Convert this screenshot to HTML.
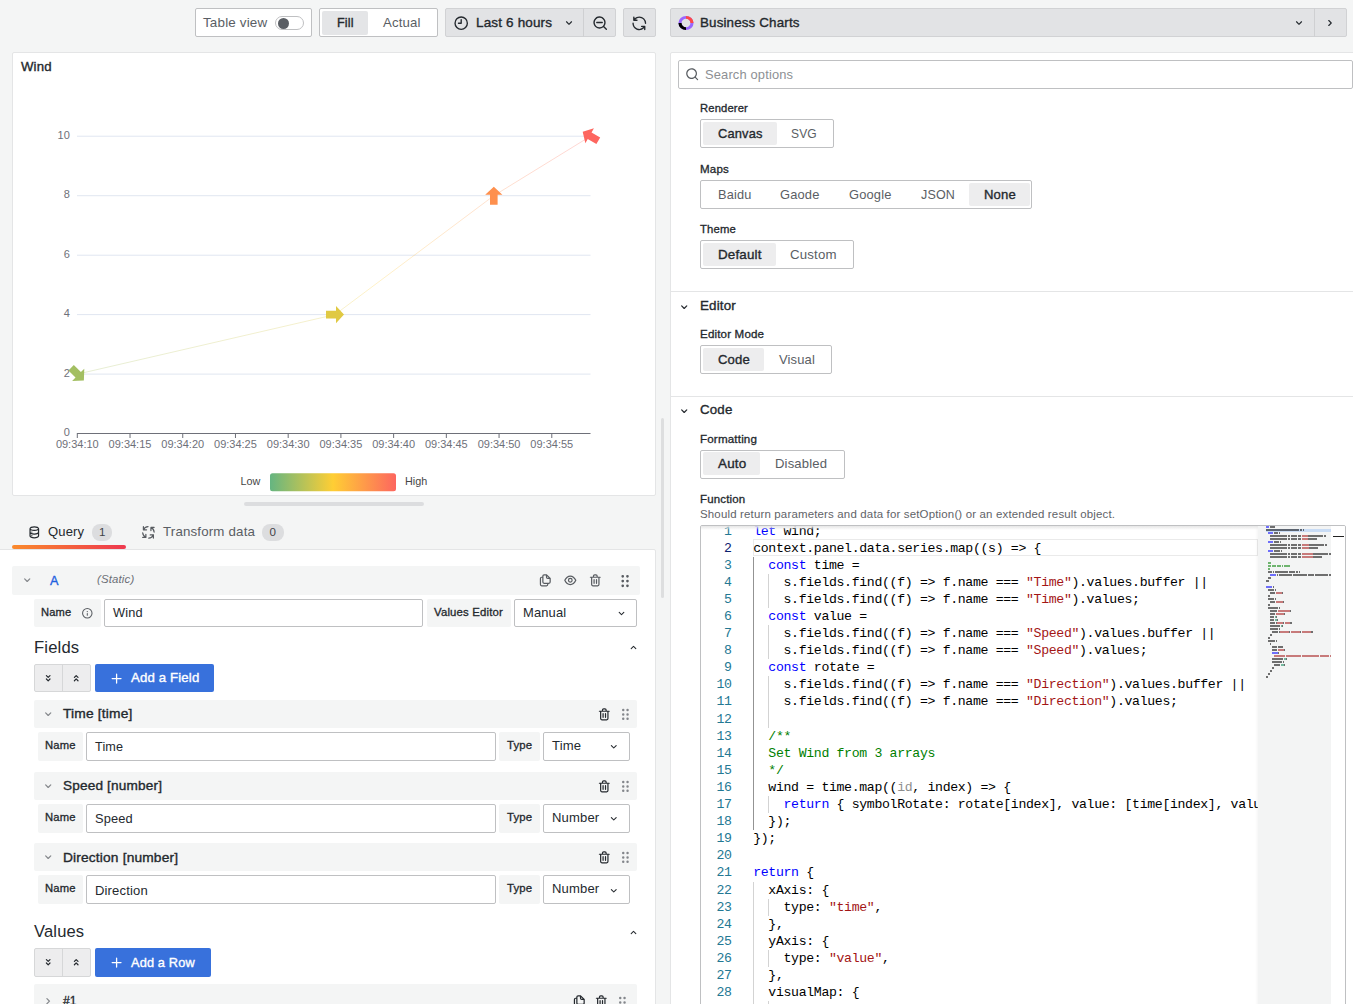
<!DOCTYPE html>
<html><head><meta charset="utf-8"><title>Edit panel - Wind</title>
<style>
html,body{margin:0;padding:0}
html{overflow:hidden;width:1353px;height:1004px}
.root{left:0;top:0;width:1353px;height:1004px;overflow:hidden}
body{width:1353px;height:1004px;overflow:hidden;background:#f4f5f5;position:relative;font-family:"Liberation Sans",sans-serif;font-size:12.600px;color:#24292e}
div,span,svg{position:absolute;box-sizing:border-box}
.ic{overflow:visible}
.abs{position:absolute}
.t{white-space:nowrap;transform:translateY(-50%);transform-origin:0 50%;line-height:1;color:#24292e}
.b{-webkit-text-stroke:.35px currentColor}
.sec{color:#5a5e64}
.lb{-webkit-text-stroke:.3px currentColor}
.inp{background:#fff;border:1px solid #bfc0c2;border-radius:2px}
.btn{background:#e2e3e5;border:1px solid #d1d2d4;border-radius:2px}
.sel{background:#ededee;border-radius:2px}
.pri{background:#3871dc;border-radius:2px}
.lbl{background:#f4f5f5;border-radius:2px}
.hdr{background:#f4f5f5;border-radius:2px}
.pill{background:#dcdddf;border-radius:8px}
.panel{background:#fff;border:1px solid #e4e5e6;border-radius:2px}
.sw{width:29px;height:13.800px;border-radius:8px;background:#fff;border:1px solid #bfc0c2}
.swk{width:11px;height:11px;border-radius:50%;background:#5a5e64}
.ax{font-family:"Liberation Sans",sans-serif;font-size:11px;fill:#6E7079}
.vm{font-family:"Liberation Sans",sans-serif;font-size:10.800px;fill:#464646}
.editor{background:#fff;border:1px solid #bfc0c2;border-radius:2px;overflow:hidden;font-family:"Liberation Mono",monospace;font-size:13.200px;letter-spacing:-.336px}
.ln{left:0;width:30.600px;text-align:right;height:17.100px;line-height:17.100px;color:#237893;white-space:pre}
.ln.act{color:#0b216f}
.cl{left:52.200px;height:17.100px;line-height:17.100px;white-space:pre;color:#000}
.cl span{position:static}
.k{color:#0000ff}.s{color:#a31515}.c{color:#008000}.n{color:#098658}.f{color:#8e8e8e}
</style></head>
<body>
<div class="root">
<div class="inp" style="left:195px;top:8px;width:117px;height:29px;"></div>
<span class="t sec" style="left:202.9px;top:23.20px;font-size:12.7px;letter-spacing:0.15px;transform:translateY(-50%) scaleX(1.0584);">Table view</span>
<div class="sw" style="left:275px;top:16px"></div><div class="swk" style="left:278.200px;top:17.700px"></div>
<div class="inp" style="left:319px;top:8px;width:119px;height:29px;"></div>
<div class="sel" style="left:322px;top:11px;width:46px;height:24px;background:#e4e5e7"></div>
<span class="t b" style="left:336.8px;top:23.20px;font-size:12.7px;letter-spacing:0.15px;transform:translateY(-50%) scaleX(0.9910);">Fill</span>
<span class="t sec" style="left:382.7px;top:23.20px;font-size:12.7px;letter-spacing:0.15px;transform:translateY(-50%) scaleX(1.0402);">Actual</span>
<div class="btn" style="left:445px;top:8px;width:171px;height:29px;"></div>
<div class="abs" style="left:583px;top:8px;width:1px;height:29px;background:#cfd0d2"></div>
<svg class="ic" style="left:452.9px;top:14.7px;width:16.4px;height:16.4px;color:#24292e;" viewBox="0 0 24 24"><path fill="currentColor" d="M12,2A10,10,0,1,0,22,12,10.010,10.010,0,0,0,12,2Zm0,18a8,8,0,1,1,8-8A8.010,8.010,0,0,1,12,20ZM12,6a1,1,0,0,0-1,1v4H8a1,1,0,0,0,0,2h4a1,1,0,0,0,1-1V7A1,1,0,0,0,12,6Z"/></svg>
<span class="t b" style="left:476.4px;top:23.20px;font-size:12.7px;letter-spacing:0.15px;transform:translateY(-50%) scaleX(1.0636);">Last 6 hours</span>
<svg class="ic" style="left:562.0px;top:15.5px;width:14px;height:14px;color:#24292e;" viewBox="0 0 24 24"><path fill="currentColor" d="M17,9.170a1,1,0,0,0-1.410,0L12,12.710,8.460,9.170a1,1,0,0,0-1.410,0,1,1,0,0,0,0,1.420l4.240,4.240a1,1,0,0,0,1.420,0L17,10.590A1,1,0,0,0,17,9.170Z"/></svg>
<svg class="ic" style="left:592.0px;top:14.7px;width:16.4px;height:16.4px;color:#24292e;" viewBox="0 0 24 24"><path fill="currentColor" d="M21.710,20.290,18,16.610A9,9,0,1,0,16.610,18l3.680,3.680a1,1,0,0,0,1.420,0A1,1,0,0,0,21.710,20.290ZM11,18a7,7,0,1,1,7-7A7,7,0,0,1,11,18Zm4-8H7a1,1,0,0,0,0,2h8a1,1,0,0,0,0-2Z"/></svg>
<div class="btn" style="left:623px;top:8px;width:33px;height:29px;"></div>
<svg class="ic" style="left:630.9px;top:14.5px;width:16.6px;height:16.6px;color:#24292e;" viewBox="0 0 24 24"><path fill="currentColor" d="M19.910,15.510H15.380a1,1,0,0,0,0,2h2.400A8,8,0,0,1,4,12a1,1,0,0,0-2,0,10,10,0,0,0,16.880,7.230V21a1,1,0,0,0,2,0V16.500A1,1,0,0,0,19.910,15.510ZM12,2A10,10,0,0,0,5.120,4.770V3a1,1,0,0,0-2,0V7.500a1,1,0,0,0,1,1h4.500a1,1,0,0,0,0-2H6.220A8,8,0,0,1,20,12a1,1,0,0,0,2,0A10,10,0,0,0,12,2Z"/></svg>
<div class="panel" style="left:12px;top:52px;width:644px;height:444px;"></div>
<span class="t b" style="left:20.9px;top:67.20px;font-size:12.7px;letter-spacing:0.15px;transform:translateY(-50%) scaleX(1.0408);">Wind</span>
<svg class="abs" style="left:0;top:0" width="1353" height="520" viewBox="0 0 1353 520"><defs><linearGradient id="lg" gradientUnits="userSpaceOnUse" x1="0" y1="433.500" x2="0" y2="136.200"><stop offset="0" stop-color="#65B581"/><stop offset=".5" stop-color="#FFCE34"/><stop offset="1" stop-color="#FD665F"/></linearGradient><linearGradient id="vm" x1="0" x2="1" y1="0" y2="0"><stop offset="0" stop-color="#65B581"/><stop offset=".5" stop-color="#FFCE34"/><stop offset="1" stop-color="#FD665F"/></linearGradient></defs><rect x="77" y="135.7" width="513.5" height="1" fill="#E0E6F1"/><text x="69.800" y="138.79999999999998" text-anchor="end" class="ax">10</text><rect x="77" y="195.2" width="513.5" height="1" fill="#E0E6F1"/><text x="69.800" y="198.29999999999998" text-anchor="end" class="ax">8</text><rect x="77" y="254.7" width="513.5" height="1" fill="#E0E6F1"/><text x="69.800" y="257.8" text-anchor="end" class="ax">6</text><rect x="77" y="314.1" width="513.5" height="1" fill="#E0E6F1"/><text x="69.800" y="317.20000000000005" text-anchor="end" class="ax">4</text><rect x="77" y="373.6" width="513.5" height="1" fill="#E0E6F1"/><text x="69.800" y="376.70000000000005" text-anchor="end" class="ax">2</text><text x="69.800" y="436.1" text-anchor="end" class="ax">0</text><rect x="77" y="433" width="513.5" height="1" fill="#6E7079"/><rect x="76.80" y="433" width="1" height="5" fill="#6E7079"/><text x="77.30" y="447.800" text-anchor="middle" class="ax">09:34:10</text><rect x="129.52" y="433" width="1" height="5" fill="#6E7079"/><text x="130.02" y="447.800" text-anchor="middle" class="ax">09:34:15</text><rect x="182.24" y="433" width="1" height="5" fill="#6E7079"/><text x="182.74" y="447.800" text-anchor="middle" class="ax">09:34:20</text><rect x="234.96" y="433" width="1" height="5" fill="#6E7079"/><text x="235.46" y="447.800" text-anchor="middle" class="ax">09:34:25</text><rect x="287.68" y="433" width="1" height="5" fill="#6E7079"/><text x="288.18" y="447.800" text-anchor="middle" class="ax">09:34:30</text><rect x="340.40" y="433" width="1" height="5" fill="#6E7079"/><text x="340.90" y="447.800" text-anchor="middle" class="ax">09:34:35</text><rect x="393.12" y="433" width="1" height="5" fill="#6E7079"/><text x="393.62" y="447.800" text-anchor="middle" class="ax">09:34:40</text><rect x="445.84" y="433" width="1" height="5" fill="#6E7079"/><text x="446.34" y="447.800" text-anchor="middle" class="ax">09:34:45</text><rect x="498.56" y="433" width="1" height="5" fill="#6E7079"/><text x="499.06" y="447.800" text-anchor="middle" class="ax">09:34:50</text><rect x="551.28" y="433" width="1" height="5" fill="#6E7079"/><text x="551.78" y="447.800" text-anchor="middle" class="ax">09:34:55</text><polyline fill="none" stroke="url(#lg)" stroke-width="1" stroke-opacity=".27" points="77.5,374.1 335,314.6 493.8,195.7 590.5,136.2"/><path transform="translate(77.5,374.1) rotate(135)" fill="#A3BF62" d="M0-9L8.600-1H3.800V9H-3.800V-1H-8.600Z"/><path transform="translate(335,314.6) rotate(90)" fill="#E0C943" d="M0-9L8.600-1H3.800V9H-3.800V-1H-8.600Z"/><path transform="translate(493.8,195.7) rotate(0)" fill="#FE904E" d="M0-9L8.600-1H3.800V9H-3.800V-1H-8.600Z"/><path transform="translate(590.5,136.2) rotate(-60)" fill="#FD665F" d="M0-9L8.600-1H3.800V9H-3.800V-1H-8.600Z"/><rect x="270" y="473.300" width="126" height="18" rx="2.500" fill="url(#vm)"/><text x="240.600" y="484.800" class="vm">Low</text><text x="405" y="484.800" class="vm">High</text></svg>
<div class="abs" style="left:244px;top:502px;width:180px;height:3.6px;background:#dcdddf;border-radius:2px"></div>
<div class="abs" style="left:661.2px;top:418px;width:3.2px;height:180px;background:#dddedf;border-radius:2px"></div>
<svg class="ic" style="left:26.8px;top:524.7px;width:14.6px;height:14.6px;color:#24292e;" viewBox="0 0 24 24"><path fill="currentColor" d="M8,16.500a1,1,0,1,0,1,1A1,1,0,0,0,8,16.500ZM12,2C8,2,4,3.370,4,6V18c0,2.630,4,4,8,4s8-1.370,8-4V6C20,3.370,16,2,12,2Zm6,16c0,.71-2.280,2-6,2s-6-1.290-6-2V14.730A13.160,13.160,0,0,0,12,16a13.160,13.160,0,0,0,6-1.270Zm0-6c0,.71-2.280,2-6,2s-6-1.290-6-2V8.730A13.160,13.160,0,0,0,12,10a13.160,13.160,0,0,0,6-1.270ZM12,8C8.280,8,6,6.710,6,6s2.280-2,6-2,6,1.290,6,2S15.720,8,12,8ZM8,10.500a1,1,0,1,0,1,1A1,1,0,0,0,8,10.500Z"/></svg>
<span class="t" style="left:48.2px;top:532.20px;font-size:12.7px;letter-spacing:0.15px;transform:translateY(-50%) scaleX(1.0284);">Query</span>
<div class="pill" style="left:92px;top:524px;width:20px;height:16.8px;"></div>
<span class="t" style="left:98.9px;top:532.00px;font-size:12.7px;color:#3f4348;font-size:11.600px">1</span>
<div class="abs" style="left:12px;top:545px;width:114px;height:3.6px;background:linear-gradient(90deg,#fa8a2c,#ee384f);border-radius:2px"></div>
<svg class="ic" style="left:140.8px;top:524.6px;width:14.8px;height:14.8px;color:#585c61;" viewBox="0 0 24 24"><path fill="none" stroke="currentColor" stroke-width="2" stroke-linecap="round" stroke-linejoin="round" stroke-width="1.900" transform="rotate(0 12 12)" d="M3.900 2.800V7.900H9M3.900 7.900A9.300 9.300 0 0 1 11.400 2.720"/><path fill="none" stroke="currentColor" stroke-width="2" stroke-linecap="round" stroke-linejoin="round" stroke-width="1.900" transform="rotate(-90 12 12)" d="M3.900 2.800V7.900H9M3.900 7.900A9.300 9.300 0 0 1 11.400 2.720"/><path fill="none" stroke="currentColor" stroke-width="2" stroke-linecap="round" stroke-linejoin="round" stroke-width="1.900" transform="rotate(-180 12 12)" d="M3.900 2.800V7.900H9M3.900 7.900A9.300 9.300 0 0 1 11.400 2.720"/><path fill="none" stroke="currentColor" stroke-width="2" stroke-linecap="round" stroke-linejoin="round" stroke-width="1.900" transform="rotate(-270 12 12)" d="M3.900 2.800V7.900H9M3.900 7.900A9.300 9.300 0 0 1 11.400 2.720"/></svg>
<span class="t sec" style="left:162.8px;top:532.20px;font-size:12.7px;letter-spacing:0.15px;transform:translateY(-50%) scaleX(1.0502);">Transform data</span>
<div class="pill" style="left:262.3px;top:524px;width:21.7px;height:16.8px;"></div>
<span class="t" style="left:269.6px;top:532.00px;font-size:12.7px;color:#3f4348;font-size:11.600px">0</span>
<div class="panel" style="left:-2px;top:549px;width:658px;height:470px;border-radius:0 2px 0 0"></div>
<div class="hdr" style="left:12px;top:566px;width:628px;height:28.7px;"></div>
<svg class="ic" style="left:20.0px;top:572.9px;width:14.4px;height:14.4px;color:#85888c;" viewBox="0 0 24 24"><path fill="currentColor" d="M17,9.170a1,1,0,0,0-1.410,0L12,12.710,8.460,9.170a1,1,0,0,0-1.410,0,1,1,0,0,0,0,1.420l4.240,4.240a1,1,0,0,0,1.420,0L17,10.590A1,1,0,0,0,17,9.170Z"/></svg>
<span class="t b" style="left:50px;top:581.20px;font-size:12.7px;color:#1f62e0">A</span>
<span class="t sm" style="left:96.5px;top:578.80px;font-size:10.9px;letter-spacing:0.15px;transform:translateY(-50%) scaleX(1.0464);color:#6b6f75;font-style:italic">(Static)</span>
<svg class="ic" style="left:538.1px;top:572.7px;width:14.6px;height:14.6px;color:#585c61;" viewBox="0 0 24 24"><path fill="currentColor" d="M21,8.940a1.310,1.310,0,0,0-.06-.27l0-.09a1.070,1.070,0,0,0-.19-.28h0l-6-6h0a1.070,1.070,0,0,0-.28-.19.320.320,0,0,0-.09,0A.880.880,0,0,0,14.050,2H10A3,3,0,0,0,7,5V6H6A3,3,0,0,0,3,9V19a3,3,0,0,0,3,3h8a3,3,0,0,0,3-3V18h1a3,3,0,0,0,3-3V9S21,9,21,8.940ZM15,5.410,17.590,8H16a1,1,0,0,1-1-1ZM15,19a1,1,0,0,1-1,1H6a1,1,0,0,1-1-1V9A1,1,0,0,1,6,8H7v7a3,3,0,0,0,3,3h5Zm4-4a1,1,0,0,1-1,1H10a1,1,0,0,1-1-1V5a1,1,0,0,1,1-1h3V7a3,3,0,0,0,3,3h3Z"/></svg>
<svg class="ic" style="left:562.9px;top:572.7px;width:14.6px;height:14.6px;color:#585c61;" viewBox="0 0 24 24"><path fill="currentColor" d="M21.920,11.600C19.900,6.910,16.100,4,12,4S4.100,6.910,2.080,11.600a1,1,0,0,0,0,.8C4.100,17.090,7.900,20,12,20s7.900-2.910,9.920-7.600A1,1,0,0,0,21.920,11.600ZM12,18c-3.170,0-6.170-2.290-7.900-6C5.830,8.290,8.830,6,12,6s6.170,2.290,7.900,6C18.170,15.710,15.170,18,12,18ZM12,8a4,4,0,1,0,4,4A4,4,0,0,0,12,8Zm0,6a2,2,0,1,1,2-2A2,2,0,0,1,12,14Z"/></svg>
<svg class="ic" style="left:587.9px;top:572.7px;width:14.6px;height:14.6px;color:#585c61;" viewBox="0 0 24 24"><path fill="currentColor" d="M10,18a1,1,0,0,0,1-1V11a1,1,0,0,0-2,0v6A1,1,0,0,0,10,18ZM20,6H16V5a3,3,0,0,0-3-3H11A3,3,0,0,0,8,5V6H4A1,1,0,0,0,4,8H5V19a3,3,0,0,0,3,3h8a3,3,0,0,0,3-3V8h1a1,1,0,0,0,0-2ZM10,5a1,1,0,0,1,1-1h2a1,1,0,0,1,1,1V6H10Zm7,14a1,1,0,0,1-1,1H8a1,1,0,0,1-1-1V8H17Zm-3-1a1,1,0,0,0,1-1V11a1,1,0,0,0-2,0v6A1,1,0,0,0,14,18Z"/></svg>
<svg class="ic" style="left:617.0px;top:572.8px;width:16.2px;height:16.2px;color:#585c61;" viewBox="0 0 24 24"><path fill="currentColor" d="M8.500,10a2,2,0,1,0,2,2A2,2,0,0,0,8.500,10Zm0,7a2,2,0,1,0,2,2A2,2,0,0,0,8.500,17Zm7-10a2,2,0,1,0-2-2A2,2,0,0,0,15.500,7Zm-7-4a2,2,0,1,0,2,2A2,2,0,0,0,8.500,3Zm7,14a2,2,0,1,0,2,2A2,2,0,0,0,15.500,17Zm0-7a2,2,0,1,0,2,2A2,2,0,0,0,15.500,10Z"/></svg>
<div class="lbl" style="left:34.2px;top:599.2px;width:66.6px;height:27.6px;"></div>
<span class="t lb" style="left:41.2px;top:611.80px;font-size:10.9px;letter-spacing:0.15px;transform:translateY(-50%) scaleX(1.0220);">Name</span>
<svg class="ic" style="left:80.7px;top:606.7px;width:12.6px;height:12.6px;color:#585c61;" viewBox="0 0 24 24"><path fill="currentColor" d="M12,2A10,10,0,1,0,22,12,10.010,10.010,0,0,0,12,2Zm0,18a8,8,0,1,1,8-8A8,8,0,0,1,12,20Zm0-8.500a1,1,0,0,0-1,1v3a1,1,0,0,0,2,0v-3A1,1,0,0,0,12,11.500Zm0-4a1.250,1.250,0,1,0,1.250,1.250A1.250,1.250,0,0,0,12,7.500Z"/></svg>
<div class="inp" style="left:104px;top:599.2px;width:318.6px;height:27.6px;"></div>
<span class="t" style="left:112.6px;top:613.00px;font-size:12.7px;letter-spacing:0.15px;transform:translateY(-50%) scaleX(1.0068);">Wind</span>
<div class="lbl" style="left:427px;top:599.2px;width:84px;height:27.6px;"></div>
<span class="t lb" style="left:434.2px;top:611.80px;font-size:10.9px;letter-spacing:0.15px;transform:translateY(-50%) scaleX(1.0456);">Values Editor</span>
<div class="inp" style="left:514px;top:599.2px;width:122.7px;height:27.6px;"></div>
<span class="t" style="left:523.1px;top:613.00px;font-size:12.7px;letter-spacing:0.15px;transform:translateY(-50%) scaleX(1.0189);">Manual</span>
<svg class="ic" style="left:614.5px;top:607.0px;width:13px;height:13px;color:#24292e;" viewBox="0 0 24 24"><path fill="currentColor" d="M17,9.170a1,1,0,0,0-1.410,0L12,12.710,8.460,9.170a1,1,0,0,0-1.410,0,1,1,0,0,0,0,1.420l4.240,4.240a1,1,0,0,0,1.420,0L17,10.590A1,1,0,0,0,17,9.170Z"/></svg>
<span class="t h" style="left:34.2px;top:646.70px;font-size:16.3px;letter-spacing:0.15px;transform:translateY(-50%) scaleX(1.0215);">Fields</span>
<svg class="ic" style="left:626.5px;top:641.2px;width:13px;height:13px;color:#24292e;" viewBox="0 0 24 24"><path fill="currentColor" d="M17,13.410,12.710,9.170a1,1,0,0,0-1.420,0L7.050,13.410a1,1,0,0,0,0,1.420,1,1,0,0,0,1.410,0L12,11.290l3.540,3.540a1,1,0,0,0,.7.290,1,1,0,0,0,.71-.29A1,1,0,0,0,17,13.410Z"/></svg>
<div class="btn" style="left:34.2px;top:663.8px;width:57px;height:28.4px;background:#ededee;border-color:#d6d7d8"></div>
<div class="abs" style="left:62px;top:663.8px;width:1px;height:28.400px;background:#d6d7d8"></div>
<svg class="ic" style="left:41.1px;top:670.9px;width:14.4px;height:14.4px;color:#24292e;" viewBox="0 0 24 24"><path fill="currentColor" d="M11.290,11.460a1,1,0,0,0,1.420,0l3-3A1,1,0,1,0,14.290,7L12,9.340,9.710,7A1,1,0,1,0,8.290,8.460Zm3,1.080L12,14.840l-2.290-2.300A1,1,0,0,0,8.290,14l3,3a1,1,0,0,0,1.420,0l3-3a1,1,0,0,0-1.420-1.420Z"/></svg>
<svg class="ic" style="left:69.3px;top:670.9px;width:14.4px;height:14.4px;color:#24292e;" viewBox="0 0 24 24"><path fill="currentColor" d="M12.710,12.540a1,1,0,0,0-1.420,0l-3,3A1,1,0,0,0,9.710,17L12,14.660,14.290,17a1,1,0,0,0,1.420,0,1,1,0,0,0,0-1.420Zm-3-1.080L12,9.160l2.290,2.300a1,1,0,0,0,1.420,0,1,1,0,0,0,0-1.420l-3-3a1,1,0,0,0-1.420,0l-3,3a1,1,0,0,0,1.420,1.420Z"/></svg>
<div class="pri" style="left:95px;top:663.8px;width:119px;height:28.4px;"></div>
<svg class="ic" style="left:108.6px;top:670.5px;width:15.2px;height:15.2px;color:#fff;" viewBox="0 0 24 24"><path fill="currentColor" d="M19,11H13V5a1,1,0,0,0-2,0v6H5a1,1,0,0,0,0,2h6v6a1,1,0,0,0,2,0V13h6a1,1,0,0,0,0-2Z"/></svg>
<span class="t b" style="left:131.2px;top:678.20px;font-size:12.7px;letter-spacing:0.15px;transform:translateY(-50%) scaleX(1.0388);color:#fff">Add a Field</span>
<div class="hdr" style="left:34.2px;top:700px;width:602.5px;height:28.2px;"></div>
<svg class="ic" style="left:40.5px;top:707.0px;width:14.4px;height:14.4px;color:#85888c;" viewBox="0 0 24 24"><path fill="currentColor" d="M17,9.170a1,1,0,0,0-1.410,0L12,12.710,8.460,9.170a1,1,0,0,0-1.410,0,1,1,0,0,0,0,1.420l4.240,4.240a1,1,0,0,0,1.420,0L17,10.590A1,1,0,0,0,17,9.170Z"/></svg>
<span class="t b" style="left:63.0px;top:713.90px;font-size:12.7px;letter-spacing:0.15px;transform:translateY(-50%) scaleX(1.0869);">Time [time]</span>
<svg class="ic" style="left:596.7px;top:706.7px;width:14.6px;height:14.6px;color:#24292e;" viewBox="0 0 24 24"><path fill="currentColor" d="M10,18a1,1,0,0,0,1-1V11a1,1,0,0,0-2,0v6A1,1,0,0,0,10,18ZM20,6H16V5a3,3,0,0,0-3-3H11A3,3,0,0,0,8,5V6H4A1,1,0,0,0,4,8H5V19a3,3,0,0,0,3,3h8a3,3,0,0,0,3-3V8h1a1,1,0,0,0,0-2ZM10,5a1,1,0,0,1,1-1h2a1,1,0,0,1,1,1V6H10Zm7,14a1,1,0,0,1-1,1H8a1,1,0,0,1-1-1V8H17Zm-3-1a1,1,0,0,0,1-1V11a1,1,0,0,0-2,0v6A1,1,0,0,0,14,18Z"/></svg>
<svg class="ic" style="left:618.4px;top:706.8px;width:14.8px;height:14.8px;color:#83868b;" viewBox="0 0 24 24"><path fill="currentColor" d="M8.500,10a2,2,0,1,0,2,2A2,2,0,0,0,8.500,10Zm0,7a2,2,0,1,0,2,2A2,2,0,0,0,8.500,17Zm7-10a2,2,0,1,0-2-2A2,2,0,0,0,15.500,7Zm-7-4a2,2,0,1,0,2,2A2,2,0,0,0,8.500,3Zm7,14a2,2,0,1,0,2,2A2,2,0,0,0,15.500,17Zm0-7a2,2,0,1,0,2,2A2,2,0,0,0,15.500,10Z"/></svg>
<div class="lbl" style="left:38.2px;top:732.2px;width:44.7px;height:28.7px;"></div>
<span class="t lb" style="left:44.7px;top:745.00px;font-size:10.9px;letter-spacing:0.15px;transform:translateY(-50%) scaleX(1.0321);">Name</span>
<div class="inp" style="left:86px;top:732.2px;width:409.5px;height:28.7px;"></div>
<span class="t" style="left:94.7px;top:747.40px;font-size:12.7px;letter-spacing:0.15px;transform:translateY(-50%) scaleX(0.9965);">Time</span>
<div class="lbl" style="left:499px;top:732.2px;width:40.7px;height:28.7px;"></div>
<span class="t lb" style="left:506.5px;top:745.00px;font-size:10.9px;letter-spacing:0.15px;transform:translateY(-50%) scaleX(1.0456);">Type</span>
<div class="inp" style="left:543.2px;top:732.2px;width:87px;height:28.7px;"></div>
<span class="t" style="left:551.8px;top:745.80px;font-size:12.7px;letter-spacing:0.15px;transform:translateY(-50%) scaleX(1.0319);">Time</span>
<svg class="ic" style="left:607.45px;top:740.45px;width:13.5px;height:13.5px;color:#24292e;" viewBox="0 0 24 24"><path fill="currentColor" d="M17,9.170a1,1,0,0,0-1.410,0L12,12.710,8.460,9.170a1,1,0,0,0-1.410,0,1,1,0,0,0,0,1.420l4.240,4.240a1,1,0,0,0,1.420,0L17,10.590A1,1,0,0,0,17,9.170Z"/></svg>
<div class="hdr" style="left:34.2px;top:771.8px;width:602.5px;height:28.2px;"></div>
<svg class="ic" style="left:40.5px;top:778.8px;width:14.4px;height:14.4px;color:#85888c;" viewBox="0 0 24 24"><path fill="currentColor" d="M17,9.170a1,1,0,0,0-1.410,0L12,12.710,8.460,9.170a1,1,0,0,0-1.410,0,1,1,0,0,0,0,1.420l4.240,4.240a1,1,0,0,0,1.420,0L17,10.590A1,1,0,0,0,17,9.170Z"/></svg>
<span class="t b" style="left:63.0px;top:785.70px;font-size:12.7px;letter-spacing:0.15px;transform:translateY(-50%) scaleX(1.0726);">Speed [number]</span>
<svg class="ic" style="left:596.7px;top:778.5px;width:14.6px;height:14.6px;color:#24292e;" viewBox="0 0 24 24"><path fill="currentColor" d="M10,18a1,1,0,0,0,1-1V11a1,1,0,0,0-2,0v6A1,1,0,0,0,10,18ZM20,6H16V5a3,3,0,0,0-3-3H11A3,3,0,0,0,8,5V6H4A1,1,0,0,0,4,8H5V19a3,3,0,0,0,3,3h8a3,3,0,0,0,3-3V8h1a1,1,0,0,0,0-2ZM10,5a1,1,0,0,1,1-1h2a1,1,0,0,1,1,1V6H10Zm7,14a1,1,0,0,1-1,1H8a1,1,0,0,1-1-1V8H17Zm-3-1a1,1,0,0,0,1-1V11a1,1,0,0,0-2,0v6A1,1,0,0,0,14,18Z"/></svg>
<svg class="ic" style="left:618.4px;top:778.6px;width:14.8px;height:14.8px;color:#83868b;" viewBox="0 0 24 24"><path fill="currentColor" d="M8.500,10a2,2,0,1,0,2,2A2,2,0,0,0,8.500,10Zm0,7a2,2,0,1,0,2,2A2,2,0,0,0,8.500,17Zm7-10a2,2,0,1,0-2-2A2,2,0,0,0,15.500,7Zm-7-4a2,2,0,1,0,2,2A2,2,0,0,0,8.500,3Zm7,14a2,2,0,1,0,2,2A2,2,0,0,0,15.500,17Zm0-7a2,2,0,1,0,2,2A2,2,0,0,0,15.500,10Z"/></svg>
<div class="lbl" style="left:38.2px;top:804.0px;width:44.7px;height:28.7px;"></div>
<span class="t lb" style="left:44.7px;top:816.80px;font-size:10.9px;letter-spacing:0.15px;transform:translateY(-50%) scaleX(1.0321);">Name</span>
<div class="inp" style="left:86px;top:804.0px;width:409.5px;height:28.7px;"></div>
<span class="t" style="left:94.7px;top:819.20px;font-size:12.7px;letter-spacing:0.15px;transform:translateY(-50%) scaleX(1.0107);">Speed</span>
<div class="lbl" style="left:499px;top:804.0px;width:40.7px;height:28.7px;"></div>
<span class="t lb" style="left:506.5px;top:816.80px;font-size:10.9px;letter-spacing:0.15px;transform:translateY(-50%) scaleX(1.0456);">Type</span>
<div class="inp" style="left:543.2px;top:804.0px;width:87px;height:28.7px;"></div>
<span class="t" style="left:551.8px;top:817.60px;font-size:12.7px;letter-spacing:0.15px;transform:translateY(-50%) scaleX(1.0283);">Number</span>
<svg class="ic" style="left:607.45px;top:812.25px;width:13.5px;height:13.5px;color:#24292e;" viewBox="0 0 24 24"><path fill="currentColor" d="M17,9.170a1,1,0,0,0-1.410,0L12,12.710,8.460,9.170a1,1,0,0,0-1.410,0,1,1,0,0,0,0,1.420l4.240,4.240a1,1,0,0,0,1.420,0L17,10.590A1,1,0,0,0,17,9.170Z"/></svg>
<div class="hdr" style="left:34.2px;top:843.2px;width:602.5px;height:28.2px;"></div>
<svg class="ic" style="left:40.5px;top:850.2px;width:14.4px;height:14.4px;color:#85888c;" viewBox="0 0 24 24"><path fill="currentColor" d="M17,9.170a1,1,0,0,0-1.410,0L12,12.710,8.460,9.170a1,1,0,0,0-1.410,0,1,1,0,0,0,0,1.420l4.240,4.240a1,1,0,0,0,1.420,0L17,10.590A1,1,0,0,0,17,9.170Z"/></svg>
<span class="t b" style="left:63.0px;top:857.90px;font-size:12.7px;letter-spacing:0.15px;transform:translateY(-50%) scaleX(1.0828);">Direction [number]</span>
<svg class="ic" style="left:596.7px;top:849.9px;width:14.6px;height:14.6px;color:#24292e;" viewBox="0 0 24 24"><path fill="currentColor" d="M10,18a1,1,0,0,0,1-1V11a1,1,0,0,0-2,0v6A1,1,0,0,0,10,18ZM20,6H16V5a3,3,0,0,0-3-3H11A3,3,0,0,0,8,5V6H4A1,1,0,0,0,4,8H5V19a3,3,0,0,0,3,3h8a3,3,0,0,0,3-3V8h1a1,1,0,0,0,0-2ZM10,5a1,1,0,0,1,1-1h2a1,1,0,0,1,1,1V6H10Zm7,14a1,1,0,0,1-1,1H8a1,1,0,0,1-1-1V8H17Zm-3-1a1,1,0,0,0,1-1V11a1,1,0,0,0-2,0v6A1,1,0,0,0,14,18Z"/></svg>
<svg class="ic" style="left:618.4px;top:850.0px;width:14.8px;height:14.8px;color:#83868b;" viewBox="0 0 24 24"><path fill="currentColor" d="M8.500,10a2,2,0,1,0,2,2A2,2,0,0,0,8.500,10Zm0,7a2,2,0,1,0,2,2A2,2,0,0,0,8.500,17Zm7-10a2,2,0,1,0-2-2A2,2,0,0,0,15.500,7Zm-7-4a2,2,0,1,0,2,2A2,2,0,0,0,8.500,3Zm7,14a2,2,0,1,0,2,2A2,2,0,0,0,15.500,17Zm0-7a2,2,0,1,0,2,2A2,2,0,0,0,15.500,10Z"/></svg>
<div class="lbl" style="left:38.2px;top:875.4000000000001px;width:44.7px;height:28.7px;"></div>
<span class="t lb" style="left:44.7px;top:888.20px;font-size:10.9px;letter-spacing:0.15px;transform:translateY(-50%) scaleX(1.0321);">Name</span>
<div class="inp" style="left:86px;top:875.4000000000001px;width:409.5px;height:28.7px;"></div>
<span class="t" style="left:94.7px;top:890.60px;font-size:12.7px;letter-spacing:0.15px;transform:translateY(-50%) scaleX(1.0273);">Direction</span>
<div class="lbl" style="left:499px;top:875.4000000000001px;width:40.7px;height:28.7px;"></div>
<span class="t lb" style="left:506.5px;top:888.20px;font-size:10.9px;letter-spacing:0.15px;transform:translateY(-50%) scaleX(1.0456);">Type</span>
<div class="inp" style="left:543.2px;top:875.4000000000001px;width:87px;height:28.7px;"></div>
<span class="t" style="left:551.8px;top:889.00px;font-size:12.7px;letter-spacing:0.15px;transform:translateY(-50%) scaleX(1.0283);">Number</span>
<svg class="ic" style="left:607.45px;top:883.65px;width:13.5px;height:13.5px;color:#24292e;" viewBox="0 0 24 24"><path fill="currentColor" d="M17,9.170a1,1,0,0,0-1.410,0L12,12.710,8.460,9.170a1,1,0,0,0-1.410,0,1,1,0,0,0,0,1.420l4.240,4.240a1,1,0,0,0,1.420,0L17,10.590A1,1,0,0,0,17,9.170Z"/></svg>
<span class="t h" style="left:34.2px;top:931.20px;font-size:16.3px;letter-spacing:0.15px;transform:translateY(-50%) scaleX(1.0162);">Values</span>
<svg class="ic" style="left:626.5px;top:925.7px;width:13px;height:13px;color:#24292e;" viewBox="0 0 24 24"><path fill="currentColor" d="M17,13.410,12.710,9.170a1,1,0,0,0-1.420,0L7.050,13.410a1,1,0,0,0,0,1.420,1,1,0,0,0,1.410,0L12,11.290l3.540,3.540a1,1,0,0,0,.7.290,1,1,0,0,0,.71-.29A1,1,0,0,0,17,13.410Z"/></svg>
<div class="btn" style="left:34.2px;top:948.3px;width:57px;height:28.4px;background:#ededee;border-color:#d6d7d8"></div>
<div class="abs" style="left:62px;top:948.3px;width:1px;height:28.400px;background:#d6d7d8"></div>
<svg class="ic" style="left:41.1px;top:955.4px;width:14.4px;height:14.4px;color:#24292e;" viewBox="0 0 24 24"><path fill="currentColor" d="M11.290,11.460a1,1,0,0,0,1.420,0l3-3A1,1,0,1,0,14.290,7L12,9.340,9.710,7A1,1,0,1,0,8.290,8.460Zm3,1.080L12,14.840l-2.290-2.300A1,1,0,0,0,8.290,14l3,3a1,1,0,0,0,1.420,0l3-3a1,1,0,0,0-1.420-1.420Z"/></svg>
<svg class="ic" style="left:69.3px;top:955.4px;width:14.4px;height:14.4px;color:#24292e;" viewBox="0 0 24 24"><path fill="currentColor" d="M12.710,12.540a1,1,0,0,0-1.420,0l-3,3A1,1,0,0,0,9.710,17L12,14.660,14.290,17a1,1,0,0,0,1.420,0,1,1,0,0,0,0-1.420Zm-3-1.080L12,9.160l2.290,2.300a1,1,0,0,0,1.420,0,1,1,0,0,0,0-1.420l-3-3a1,1,0,0,0-1.420,0l-3,3a1,1,0,0,0,1.420,1.420Z"/></svg>
<div class="pri" style="left:95px;top:948.3px;width:116px;height:28.4px;"></div>
<svg class="ic" style="left:108.6px;top:955.0px;width:15.2px;height:15.2px;color:#fff;" viewBox="0 0 24 24"><path fill="currentColor" d="M19,11H13V5a1,1,0,0,0-2,0v6H5a1,1,0,0,0,0,2h6v6a1,1,0,0,0,2,0V13h6a1,1,0,0,0,0-2Z"/></svg>
<span class="t b" style="left:131.2px;top:962.70px;font-size:12.7px;letter-spacing:0.15px;transform:translateY(-50%) scaleX(1.0063);color:#fff">Add a Row</span>
<div class="hdr" style="left:34.2px;top:984.2px;width:602.5px;height:27.7px;"></div>
<svg class="ic" style="left:40.8px;top:994.0px;width:14.4px;height:14.4px;color:#85888c;" viewBox="0 0 24 24"><path fill="currentColor" d="M14.830,11.290,10.590,7.050a1,1,0,0,0-1.420,0,1,1,0,0,0,0,1.410L12.710,12,9.170,15.540a1,1,0,0,0,0,1.410,1,1,0,0,0,.71.290,1,1,0,0,0,.71-.29l4.240-4.240A1,1,0,0,0,14.830,11.290Z"/></svg>
<span class="t b" style="left:63.3px;top:1000.90px;font-size:12.7px;letter-spacing:0.15px;transform:translateY(-50%) scaleX(0.9510);">#1</span>
<svg class="ic" style="left:571.7px;top:994.2px;width:14.6px;height:14.6px;color:#24292e;" viewBox="0 0 24 24"><path fill="currentColor" d="M21,8.940a1.310,1.310,0,0,0-.06-.27l0-.09a1.070,1.070,0,0,0-.19-.28h0l-6-6h0a1.070,1.070,0,0,0-.28-.19.320.320,0,0,0-.09,0A.880.880,0,0,0,14.050,2H10A3,3,0,0,0,7,5V6H6A3,3,0,0,0,3,9V19a3,3,0,0,0,3,3h8a3,3,0,0,0,3-3V18h1a3,3,0,0,0,3-3V9S21,9,21,8.940ZM15,5.410,17.590,8H16a1,1,0,0,1-1-1ZM15,19a1,1,0,0,1-1,1H6a1,1,0,0,1-1-1V9A1,1,0,0,1,6,8H7v7a3,3,0,0,0,3,3h5Zm4-4a1,1,0,0,1-1,1H10a1,1,0,0,1-1-1V5a1,1,0,0,1,1-1h3V7a3,3,0,0,0,3,3h3Z"/></svg>
<svg class="ic" style="left:593.7px;top:994.2px;width:14.6px;height:14.6px;color:#24292e;" viewBox="0 0 24 24"><path fill="currentColor" d="M10,18a1,1,0,0,0,1-1V11a1,1,0,0,0-2,0v6A1,1,0,0,0,10,18ZM20,6H16V5a3,3,0,0,0-3-3H11A3,3,0,0,0,8,5V6H4A1,1,0,0,0,4,8H5V19a3,3,0,0,0,3,3h8a3,3,0,0,0,3-3V8h1a1,1,0,0,0,0-2ZM10,5a1,1,0,0,1,1-1h2a1,1,0,0,1,1,1V6H10Zm7,14a1,1,0,0,1-1,1H8a1,1,0,0,1-1-1V8H17Zm-3-1a1,1,0,0,0,1-1V11a1,1,0,0,0-2,0v6A1,1,0,0,0,14,18Z"/></svg>
<svg class="ic" style="left:614.6px;top:994.6px;width:14.8px;height:14.8px;color:#83868b;" viewBox="0 0 24 24"><path fill="currentColor" d="M8.500,10a2,2,0,1,0,2,2A2,2,0,0,0,8.500,10Zm0,7a2,2,0,1,0,2,2A2,2,0,0,0,8.500,17Zm7-10a2,2,0,1,0-2-2A2,2,0,0,0,15.500,7Zm-7-4a2,2,0,1,0,2,2A2,2,0,0,0,8.500,3Zm7,14a2,2,0,1,0,2,2A2,2,0,0,0,15.500,17Zm0-7a2,2,0,1,0,2,2A2,2,0,0,0,15.500,10Z"/></svg>
<div class="btn" style="left:670px;top:8px;width:677px;height:29px;"></div>
<div class="abs" style="left:1314px;top:8px;width:1px;height:29px;background:#cfd0d2"></div>
<svg class="ic" style="left:675.500px;top:13px;width:20px;height:20px" viewBox="-10 -10 20 20"><g fill="none" stroke-width="3.100" transform="scale(1,.94)"><circle r="6" stroke="#9966ff"/><path d="M0-6A6 6 0 0 1 6 0" stroke="#ff4848"/><path d="M-6 0A6 6 0 0 0 0 6" stroke="#000"/></g></svg>
<span class="t b" style="left:700.1px;top:23.20px;font-size:12.7px;letter-spacing:0.15px;transform:translateY(-50%) scaleX(1.0524);">Business Charts</span>
<svg class="ic" style="left:1292.0px;top:15.8px;width:14px;height:14px;color:#24292e;" viewBox="0 0 24 24"><path fill="currentColor" d="M17,9.170a1,1,0,0,0-1.410,0L12,12.710,8.460,9.170a1,1,0,0,0-1.410,0,1,1,0,0,0,0,1.420l4.240,4.240a1,1,0,0,0,1.420,0L17,10.590A1,1,0,0,0,17,9.170Z"/></svg>
<svg class="ic" style="left:1323.0px;top:15.8px;width:14px;height:14px;color:#24292e;" viewBox="0 0 24 24"><path fill="currentColor" d="M14.830,11.290,10.590,7.050a1,1,0,0,0-1.420,0,1,1,0,0,0,0,1.410L12.710,12,9.170,15.540a1,1,0,0,0,0,1.410,1,1,0,0,0,.71.290,1,1,0,0,0,.71-.29l4.240-4.240A1,1,0,0,0,14.830,11.290Z"/></svg>
<div class="panel" style="left:670px;top:52px;width:700px;height:970px;border-radius:2px 0 0 0"></div>
<div class="inp" style="left:678px;top:60.3px;width:675px;height:28.7px;"></div>
<svg class="ic" style="left:684.5px;top:67.4px;width:14.4px;height:14.4px;color:#585c61;" viewBox="0 0 24 24"><path fill="currentColor" d="M21.710,20.290,18,16.610A9,9,0,1,0,16.610,18l3.680,3.680a1,1,0,0,0,1.420,0A1,1,0,0,0,21.710,20.290ZM11,18a7,7,0,1,1,7-7A7,7,0,0,1,11,18Z"/></svg>
<span class="t" style="left:704.9px;top:75.20px;font-size:12.7px;letter-spacing:0.15px;transform:translateY(-50%) scaleX(1.0167);color:#8d9094">Search options</span>
<span class="t lb" style="left:699.9px;top:107.70px;font-size:10.9px;letter-spacing:0.15px;transform:translateY(-50%) scaleX(1.0301);">Renderer</span>
<div class="inp" style="left:700px;top:119px;width:133.5px;height:29px;"></div>
<div class="sel" style="left:703.3px;top:122px;width:73.70000000000005px;height:23px;"></div>
<span class="t b" style="left:717.5px;top:134.00px;font-size:12.7px;letter-spacing:0.15px;transform:translateY(-50%) scaleX(1.0137);">Canvas</span>
<span class="t sec" style="left:791.2px;top:134.00px;font-size:12.7px;letter-spacing:0.15px;transform:translateY(-50%) scaleX(0.9483);">SVG</span>
<span class="t lb" style="left:699.9px;top:168.70px;font-size:10.9px;letter-spacing:0.15px;transform:translateY(-50%) scaleX(1.0627);">Maps</span>
<div class="inp" style="left:700px;top:180px;width:332.4000000000001px;height:29px;"></div>
<span class="t sec" style="left:717.5px;top:195.00px;font-size:12.7px;letter-spacing:0.15px;transform:translateY(-50%) scaleX(1.0060);">Baidu</span>
<span class="t sec" style="left:780.0px;top:195.00px;font-size:12.7px;letter-spacing:0.15px;transform:translateY(-50%) scaleX(1.0168);">Gaode</span>
<span class="t sec" style="left:848.7px;top:195.00px;font-size:12.7px;letter-spacing:0.15px;transform:translateY(-50%) scaleX(1.0168);">Google</span>
<span class="t sec" style="left:920.9px;top:195.00px;font-size:12.7px;letter-spacing:0.15px;transform:translateY(-50%) scaleX(0.9854);">JSON</span>
<div class="sel" style="left:968.8px;top:183px;width:61.600000000000136px;height:23px;"></div>
<span class="t b" style="left:984.0px;top:195.00px;font-size:12.7px;letter-spacing:0.15px;transform:translateY(-50%) scaleX(1.0325);">None</span>
<span class="t lb" style="left:699.9px;top:228.90px;font-size:10.9px;letter-spacing:0.15px;transform:translateY(-50%) scaleX(1.0377);">Theme</span>
<div class="inp" style="left:700px;top:240px;width:153.70000000000005px;height:29px;"></div>
<div class="sel" style="left:703.3px;top:243px;width:72.70000000000005px;height:23px;"></div>
<span class="t b" style="left:717.5px;top:255.00px;font-size:12.7px;letter-spacing:0.15px;transform:translateY(-50%) scaleX(1.0547);">Default</span>
<span class="t sec" style="left:790.1px;top:255.00px;font-size:12.7px;letter-spacing:0.15px;transform:translateY(-50%) scaleX(1.0449);">Custom</span>
<div class="abs" style="left:670px;top:290.7px;width:700px;height:1px;background:#e4e5e6"></div>
<svg class="ic" style="left:677.0px;top:299.5px;width:14.4px;height:14.4px;color:#24292e;" viewBox="0 0 24 24"><path fill="currentColor" d="M17,9.170a1,1,0,0,0-1.410,0L12,12.710,8.460,9.170a1,1,0,0,0-1.410,0,1,1,0,0,0,0,1.420l4.240,4.240a1,1,0,0,0,1.420,0L17,10.590A1,1,0,0,0,17,9.170Z"/></svg>
<span class="t b" style="left:700.3px;top:306.10px;font-size:12.7px;letter-spacing:0.15px;transform:translateY(-50%) scaleX(1.0545);">Editor</span>
<span class="t lb" style="left:699.9px;top:334.40px;font-size:10.9px;letter-spacing:0.15px;transform:translateY(-50%) scaleX(1.0639);">Editor Mode</span>
<div class="inp" style="left:700px;top:345px;width:131.5px;height:29px;"></div>
<div class="sel" style="left:703.3px;top:348px;width:60.700000000000045px;height:23px;"></div>
<span class="t b" style="left:717.5px;top:360.00px;font-size:12.7px;letter-spacing:0.15px;transform:translateY(-50%) scaleX(1.0325);">Code</span>
<span class="t sec" style="left:779.0px;top:360.00px;font-size:12.7px;letter-spacing:0.15px;transform:translateY(-50%) scaleX(1.0228);">Visual</span>
<div class="abs" style="left:670px;top:396.2px;width:700px;height:1px;background:#e4e5e6"></div>
<svg class="ic" style="left:677.0px;top:404.0px;width:14.4px;height:14.4px;color:#24292e;" viewBox="0 0 24 24"><path fill="currentColor" d="M17,9.170a1,1,0,0,0-1.410,0L12,12.710,8.460,9.170a1,1,0,0,0-1.410,0,1,1,0,0,0,0,1.420l4.240,4.240a1,1,0,0,0,1.420,0L17,10.590A1,1,0,0,0,17,9.170Z"/></svg>
<span class="t b" style="left:700.3px;top:409.80px;font-size:12.7px;letter-spacing:0.15px;transform:translateY(-50%) scaleX(1.0487);">Code</span>
<span class="t lb" style="left:699.9px;top:439.40px;font-size:10.9px;letter-spacing:0.15px;transform:translateY(-50%) scaleX(1.0664);">Formatting</span>
<div class="inp" style="left:700px;top:450px;width:144.70000000000005px;height:29px;"></div>
<div class="sel" style="left:703.3px;top:452.2px;width:56.700000000000045px;height:23px;"></div>
<span class="t b" style="left:717.5px;top:464.20px;font-size:12.7px;letter-spacing:0.15px;transform:translateY(-50%) scaleX(1.0602);">Auto</span>
<span class="t sec" style="left:775.0px;top:464.20px;font-size:12.7px;letter-spacing:0.15px;transform:translateY(-50%) scaleX(1.0307);">Disabled</span>
<span class="t lb" style="left:700.1px;top:498.60px;font-size:10.9px;letter-spacing:0.15px;transform:translateY(-50%) scaleX(1.0548);">Function</span>
<span class="t sm" style="left:700.1px;top:514.40px;font-size:10.9px;letter-spacing:0.15px;transform:translateY(-50%) scaleX(1.0541);color:#5f6368">Should return parameters and data for setOption() or an extended result object.</span>
<div class="editor" style="left:700px;top:525px;width:646px;height:490px"><div class="abs" style="left:557px;top:0;width:73px;height:490px;background:#f3f4f4"></div><div class="abs" style="left:52px;top:13px;width:505px;height:17px;box-sizing:border-box;border:1px solid #eaeaea"></div><div class="abs" style="left:52px;top:30.65px;width:1px;height:273.60px;background:#939393"></div><div class="abs" style="left:67px;top:47.75px;width:1px;height:34.20px;background:#d3d3d3"></div><div class="abs" style="left:67px;top:99.05px;width:1px;height:34.20px;background:#d3d3d3"></div><div class="abs" style="left:67px;top:150.35px;width:1px;height:51.30px;background:#d3d3d3"></div><div class="abs" style="left:67px;top:270.05px;width:1px;height:17.10px;background:#d3d3d3"></div><div class="abs" style="left:52px;top:355.55px;width:1px;height:324.90px;background:#d3d3d3"></div><div class="abs" style="left:67px;top:372.65px;width:1px;height:17.10px;background:#d3d3d3"></div><div class="abs" style="left:67px;top:423.95px;width:1px;height:17.10px;background:#d3d3d3"></div><div class="abs" style="left:67px;top:475.25px;width:1px;height:153.90px;background:#d3d3d3"></div><div class="ln" style="top:-2.75px">1</div><div class="cl" style="top:-2.75px"><span class="k">let</span> wind;</div><div class="ln act" style="top:13.55px">2</div><div class="cl" style="top:13.55px">context.panel.data.series.map((s) =&gt; {</div><div class="ln" style="top:30.65px">3</div><div class="cl" style="top:30.65px">  <span class="k">const</span> time =</div><div class="ln" style="top:47.75px">4</div><div class="cl" style="top:47.75px">    s.fields.find((f) =&gt; f.name === <span class="s">&quot;Time&quot;</span>).values.buffer ||</div><div class="ln" style="top:64.85px">5</div><div class="cl" style="top:64.85px">    s.fields.find((f) =&gt; f.name === <span class="s">&quot;Time&quot;</span>).values;</div><div class="ln" style="top:81.95px">6</div><div class="cl" style="top:81.95px">  <span class="k">const</span> value =</div><div class="ln" style="top:99.05px">7</div><div class="cl" style="top:99.05px">    s.fields.find((f) =&gt; f.name === <span class="s">&quot;Speed&quot;</span>).values.buffer ||</div><div class="ln" style="top:116.15px">8</div><div class="cl" style="top:116.15px">    s.fields.find((f) =&gt; f.name === <span class="s">&quot;Speed&quot;</span>).values;</div><div class="ln" style="top:133.25px">9</div><div class="cl" style="top:133.25px">  <span class="k">const</span> rotate =</div><div class="ln" style="top:150.35px">10</div><div class="cl" style="top:150.35px">    s.fields.find((f) =&gt; f.name === <span class="s">&quot;Direction&quot;</span>).values.buffer ||</div><div class="ln" style="top:167.45px">11</div><div class="cl" style="top:167.45px">    s.fields.find((f) =&gt; f.name === <span class="s">&quot;Direction&quot;</span>).values;</div><div class="ln" style="top:184.55px">12</div><div class="cl" style="top:184.55px"></div><div class="ln" style="top:201.65px">13</div><div class="cl" style="top:201.65px"><span class="c">  /**</span></div><div class="ln" style="top:218.75px">14</div><div class="cl" style="top:218.75px"><span class="c">  Set Wind from 3 arrays</span></div><div class="ln" style="top:235.85px">15</div><div class="cl" style="top:235.85px"><span class="c">  */</span></div><div class="ln" style="top:252.95px">16</div><div class="cl" style="top:252.95px">  wind = time.map((<span class="f">id</span>, index) =&gt; {</div><div class="ln" style="top:270.05px">17</div><div class="cl" style="top:270.05px">    <span class="k">return</span> { symbolRotate: rotate[index], value: [time[index], value[index]] };</div><div class="ln" style="top:287.15px">18</div><div class="cl" style="top:287.15px">  });</div><div class="ln" style="top:304.25px">19</div><div class="cl" style="top:304.25px">});</div><div class="ln" style="top:321.35px">20</div><div class="cl" style="top:321.35px"></div><div class="ln" style="top:338.45px">21</div><div class="cl" style="top:338.45px"><span class="k">return</span> {</div><div class="ln" style="top:355.55px">22</div><div class="cl" style="top:355.55px">  xAxis: {</div><div class="ln" style="top:372.65px">23</div><div class="cl" style="top:372.65px">    type: <span class="s">&quot;time&quot;</span>,</div><div class="ln" style="top:389.75px">24</div><div class="cl" style="top:389.75px">  },</div><div class="ln" style="top:406.85px">25</div><div class="cl" style="top:406.85px">  yAxis: {</div><div class="ln" style="top:423.95px">26</div><div class="cl" style="top:423.95px">    type: <span class="s">&quot;value&quot;</span>,</div><div class="ln" style="top:441.05px">27</div><div class="cl" style="top:441.05px">  },</div><div class="ln" style="top:458.15px">28</div><div class="cl" style="top:458.15px">  visualMap: {</div><div class="ln" style="top:475.25px">29</div><div class="cl" style="top:475.25px">    orient: <span class="s">&quot;horizontal&quot;</span>,</div><div class="abs" style="left:557px;top:0;width:89px;height:490px;background:#fff"></div><div class="abs" style="left:557px;top:0;width:73px;height:490px;background:#f3f4f4"></div><div class="abs" style="left:554px;top:0;width:3px;height:490px;background:linear-gradient(90deg,rgba(0,0,0,0),rgba(0,0,0,.035))"></div><svg class="abs" style="left:557px;top:0" width="73" height="490" viewBox="0 0 73 490" shape-rendering="crispEdges"><rect x="8" y="3.0" width="65" height="3" fill="#c9dcf5"/><rect x="8.0" y="0.0" width="3.0" height="2" fill="#0000ff" fill-opacity=".55"/><rect x="12.0" y="0.0" width="4.0" height="2" fill="#000" fill-opacity=".55"/><rect x="16.0" y="0.0" width="1.0" height="2" fill="#000" fill-opacity=".55"/><rect x="8.0" y="3.0" width="7.0" height="2" fill="#000" fill-opacity=".55"/><rect x="15.0" y="3.0" width="1.0" height="2" fill="#000" fill-opacity=".55"/><rect x="16.0" y="3.0" width="5.0" height="2" fill="#000" fill-opacity=".55"/><rect x="21.0" y="3.0" width="1.0" height="2" fill="#000" fill-opacity=".55"/><rect x="22.0" y="3.0" width="4.0" height="2" fill="#000" fill-opacity=".55"/><rect x="26.0" y="3.0" width="1.0" height="2" fill="#000" fill-opacity=".55"/><rect x="27.0" y="3.0" width="6.0" height="2" fill="#000" fill-opacity=".55"/><rect x="33.0" y="3.0" width="1.0" height="2" fill="#000" fill-opacity=".55"/><rect x="34.0" y="3.0" width="3.0" height="2" fill="#000" fill-opacity=".55"/><rect x="37.0" y="3.0" width="1.0" height="2" fill="#000" fill-opacity=".55"/><rect x="38.0" y="3.0" width="1.0" height="2" fill="#000" fill-opacity=".55"/><rect x="39.0" y="3.0" width="1.0" height="2" fill="#000" fill-opacity=".55"/><rect x="40.0" y="3.0" width="1.0" height="2" fill="#000" fill-opacity=".55"/><rect x="42.0" y="3.0" width="1.0" height="2" fill="#000" fill-opacity=".55"/><rect x="43.0" y="3.0" width="1.0" height="2" fill="#000" fill-opacity=".55"/><rect x="45.0" y="3.0" width="1.0" height="2" fill="#000" fill-opacity=".55"/><rect x="10.0" y="6.0" width="5.0" height="2" fill="#0000ff" fill-opacity=".55"/><rect x="16.0" y="6.0" width="4.0" height="2" fill="#000" fill-opacity=".55"/><rect x="21.0" y="6.0" width="1.0" height="2" fill="#000" fill-opacity=".55"/><rect x="12.0" y="9.0" width="1.0" height="2" fill="#000" fill-opacity=".55"/><rect x="13.0" y="9.0" width="1.0" height="2" fill="#000" fill-opacity=".55"/><rect x="14.0" y="9.0" width="6.0" height="2" fill="#000" fill-opacity=".55"/><rect x="20.0" y="9.0" width="1.0" height="2" fill="#000" fill-opacity=".55"/><rect x="21.0" y="9.0" width="4.0" height="2" fill="#000" fill-opacity=".55"/><rect x="25.0" y="9.0" width="1.0" height="2" fill="#000" fill-opacity=".55"/><rect x="26.0" y="9.0" width="1.0" height="2" fill="#000" fill-opacity=".55"/><rect x="27.0" y="9.0" width="1.0" height="2" fill="#000" fill-opacity=".55"/><rect x="28.0" y="9.0" width="1.0" height="2" fill="#000" fill-opacity=".55"/><rect x="30.0" y="9.0" width="1.0" height="2" fill="#000" fill-opacity=".55"/><rect x="31.0" y="9.0" width="1.0" height="2" fill="#000" fill-opacity=".55"/><rect x="33.0" y="9.0" width="1.0" height="2" fill="#000" fill-opacity=".55"/><rect x="34.0" y="9.0" width="1.0" height="2" fill="#000" fill-opacity=".55"/><rect x="35.0" y="9.0" width="4.0" height="2" fill="#000" fill-opacity=".55"/><rect x="40.0" y="9.0" width="1.0" height="2" fill="#000" fill-opacity=".55"/><rect x="41.0" y="9.0" width="1.0" height="2" fill="#000" fill-opacity=".55"/><rect x="42.0" y="9.0" width="1.0" height="2" fill="#000" fill-opacity=".55"/><rect x="44.0" y="9.0" width="6.0" height="2" fill="#a31515" fill-opacity=".55"/><rect x="50.0" y="9.0" width="1.0" height="2" fill="#000" fill-opacity=".55"/><rect x="51.0" y="9.0" width="1.0" height="2" fill="#000" fill-opacity=".55"/><rect x="52.0" y="9.0" width="6.0" height="2" fill="#000" fill-opacity=".55"/><rect x="58.0" y="9.0" width="1.0" height="2" fill="#000" fill-opacity=".55"/><rect x="59.0" y="9.0" width="6.0" height="2" fill="#000" fill-opacity=".55"/><rect x="66.0" y="9.0" width="1.0" height="2" fill="#000" fill-opacity=".55"/><rect x="67.0" y="9.0" width="1.0" height="2" fill="#000" fill-opacity=".55"/><rect x="12.0" y="12.0" width="1.0" height="2" fill="#000" fill-opacity=".55"/><rect x="13.0" y="12.0" width="1.0" height="2" fill="#000" fill-opacity=".55"/><rect x="14.0" y="12.0" width="6.0" height="2" fill="#000" fill-opacity=".55"/><rect x="20.0" y="12.0" width="1.0" height="2" fill="#000" fill-opacity=".55"/><rect x="21.0" y="12.0" width="4.0" height="2" fill="#000" fill-opacity=".55"/><rect x="25.0" y="12.0" width="1.0" height="2" fill="#000" fill-opacity=".55"/><rect x="26.0" y="12.0" width="1.0" height="2" fill="#000" fill-opacity=".55"/><rect x="27.0" y="12.0" width="1.0" height="2" fill="#000" fill-opacity=".55"/><rect x="28.0" y="12.0" width="1.0" height="2" fill="#000" fill-opacity=".55"/><rect x="30.0" y="12.0" width="1.0" height="2" fill="#000" fill-opacity=".55"/><rect x="31.0" y="12.0" width="1.0" height="2" fill="#000" fill-opacity=".55"/><rect x="33.0" y="12.0" width="1.0" height="2" fill="#000" fill-opacity=".55"/><rect x="34.0" y="12.0" width="1.0" height="2" fill="#000" fill-opacity=".55"/><rect x="35.0" y="12.0" width="4.0" height="2" fill="#000" fill-opacity=".55"/><rect x="40.0" y="12.0" width="1.0" height="2" fill="#000" fill-opacity=".55"/><rect x="41.0" y="12.0" width="1.0" height="2" fill="#000" fill-opacity=".55"/><rect x="42.0" y="12.0" width="1.0" height="2" fill="#000" fill-opacity=".55"/><rect x="44.0" y="12.0" width="6.0" height="2" fill="#a31515" fill-opacity=".55"/><rect x="50.0" y="12.0" width="1.0" height="2" fill="#000" fill-opacity=".55"/><rect x="51.0" y="12.0" width="1.0" height="2" fill="#000" fill-opacity=".55"/><rect x="52.0" y="12.0" width="6.0" height="2" fill="#000" fill-opacity=".55"/><rect x="58.0" y="12.0" width="1.0" height="2" fill="#000" fill-opacity=".55"/><rect x="10.0" y="15.0" width="5.0" height="2" fill="#0000ff" fill-opacity=".55"/><rect x="16.0" y="15.0" width="5.0" height="2" fill="#000" fill-opacity=".55"/><rect x="22.0" y="15.0" width="1.0" height="2" fill="#000" fill-opacity=".55"/><rect x="12.0" y="18.0" width="1.0" height="2" fill="#000" fill-opacity=".55"/><rect x="13.0" y="18.0" width="1.0" height="2" fill="#000" fill-opacity=".55"/><rect x="14.0" y="18.0" width="6.0" height="2" fill="#000" fill-opacity=".55"/><rect x="20.0" y="18.0" width="1.0" height="2" fill="#000" fill-opacity=".55"/><rect x="21.0" y="18.0" width="4.0" height="2" fill="#000" fill-opacity=".55"/><rect x="25.0" y="18.0" width="1.0" height="2" fill="#000" fill-opacity=".55"/><rect x="26.0" y="18.0" width="1.0" height="2" fill="#000" fill-opacity=".55"/><rect x="27.0" y="18.0" width="1.0" height="2" fill="#000" fill-opacity=".55"/><rect x="28.0" y="18.0" width="1.0" height="2" fill="#000" fill-opacity=".55"/><rect x="30.0" y="18.0" width="1.0" height="2" fill="#000" fill-opacity=".55"/><rect x="31.0" y="18.0" width="1.0" height="2" fill="#000" fill-opacity=".55"/><rect x="33.0" y="18.0" width="1.0" height="2" fill="#000" fill-opacity=".55"/><rect x="34.0" y="18.0" width="1.0" height="2" fill="#000" fill-opacity=".55"/><rect x="35.0" y="18.0" width="4.0" height="2" fill="#000" fill-opacity=".55"/><rect x="40.0" y="18.0" width="1.0" height="2" fill="#000" fill-opacity=".55"/><rect x="41.0" y="18.0" width="1.0" height="2" fill="#000" fill-opacity=".55"/><rect x="42.0" y="18.0" width="1.0" height="2" fill="#000" fill-opacity=".55"/><rect x="44.0" y="18.0" width="7.0" height="2" fill="#a31515" fill-opacity=".55"/><rect x="51.0" y="18.0" width="1.0" height="2" fill="#000" fill-opacity=".55"/><rect x="52.0" y="18.0" width="1.0" height="2" fill="#000" fill-opacity=".55"/><rect x="53.0" y="18.0" width="6.0" height="2" fill="#000" fill-opacity=".55"/><rect x="59.0" y="18.0" width="1.0" height="2" fill="#000" fill-opacity=".55"/><rect x="60.0" y="18.0" width="6.0" height="2" fill="#000" fill-opacity=".55"/><rect x="67.0" y="18.0" width="1.0" height="2" fill="#000" fill-opacity=".55"/><rect x="68.0" y="18.0" width="1.0" height="2" fill="#000" fill-opacity=".55"/><rect x="12.0" y="21.0" width="1.0" height="2" fill="#000" fill-opacity=".55"/><rect x="13.0" y="21.0" width="1.0" height="2" fill="#000" fill-opacity=".55"/><rect x="14.0" y="21.0" width="6.0" height="2" fill="#000" fill-opacity=".55"/><rect x="20.0" y="21.0" width="1.0" height="2" fill="#000" fill-opacity=".55"/><rect x="21.0" y="21.0" width="4.0" height="2" fill="#000" fill-opacity=".55"/><rect x="25.0" y="21.0" width="1.0" height="2" fill="#000" fill-opacity=".55"/><rect x="26.0" y="21.0" width="1.0" height="2" fill="#000" fill-opacity=".55"/><rect x="27.0" y="21.0" width="1.0" height="2" fill="#000" fill-opacity=".55"/><rect x="28.0" y="21.0" width="1.0" height="2" fill="#000" fill-opacity=".55"/><rect x="30.0" y="21.0" width="1.0" height="2" fill="#000" fill-opacity=".55"/><rect x="31.0" y="21.0" width="1.0" height="2" fill="#000" fill-opacity=".55"/><rect x="33.0" y="21.0" width="1.0" height="2" fill="#000" fill-opacity=".55"/><rect x="34.0" y="21.0" width="1.0" height="2" fill="#000" fill-opacity=".55"/><rect x="35.0" y="21.0" width="4.0" height="2" fill="#000" fill-opacity=".55"/><rect x="40.0" y="21.0" width="1.0" height="2" fill="#000" fill-opacity=".55"/><rect x="41.0" y="21.0" width="1.0" height="2" fill="#000" fill-opacity=".55"/><rect x="42.0" y="21.0" width="1.0" height="2" fill="#000" fill-opacity=".55"/><rect x="44.0" y="21.0" width="7.0" height="2" fill="#a31515" fill-opacity=".55"/><rect x="51.0" y="21.0" width="1.0" height="2" fill="#000" fill-opacity=".55"/><rect x="52.0" y="21.0" width="1.0" height="2" fill="#000" fill-opacity=".55"/><rect x="53.0" y="21.0" width="6.0" height="2" fill="#000" fill-opacity=".55"/><rect x="59.0" y="21.0" width="1.0" height="2" fill="#000" fill-opacity=".55"/><rect x="10.0" y="24.0" width="5.0" height="2" fill="#0000ff" fill-opacity=".55"/><rect x="16.0" y="24.0" width="6.0" height="2" fill="#000" fill-opacity=".55"/><rect x="23.0" y="24.0" width="1.0" height="2" fill="#000" fill-opacity=".55"/><rect x="12.0" y="27.0" width="1.0" height="2" fill="#000" fill-opacity=".55"/><rect x="13.0" y="27.0" width="1.0" height="2" fill="#000" fill-opacity=".55"/><rect x="14.0" y="27.0" width="6.0" height="2" fill="#000" fill-opacity=".55"/><rect x="20.0" y="27.0" width="1.0" height="2" fill="#000" fill-opacity=".55"/><rect x="21.0" y="27.0" width="4.0" height="2" fill="#000" fill-opacity=".55"/><rect x="25.0" y="27.0" width="1.0" height="2" fill="#000" fill-opacity=".55"/><rect x="26.0" y="27.0" width="1.0" height="2" fill="#000" fill-opacity=".55"/><rect x="27.0" y="27.0" width="1.0" height="2" fill="#000" fill-opacity=".55"/><rect x="28.0" y="27.0" width="1.0" height="2" fill="#000" fill-opacity=".55"/><rect x="30.0" y="27.0" width="1.0" height="2" fill="#000" fill-opacity=".55"/><rect x="31.0" y="27.0" width="1.0" height="2" fill="#000" fill-opacity=".55"/><rect x="33.0" y="27.0" width="1.0" height="2" fill="#000" fill-opacity=".55"/><rect x="34.0" y="27.0" width="1.0" height="2" fill="#000" fill-opacity=".55"/><rect x="35.0" y="27.0" width="4.0" height="2" fill="#000" fill-opacity=".55"/><rect x="40.0" y="27.0" width="1.0" height="2" fill="#000" fill-opacity=".55"/><rect x="41.0" y="27.0" width="1.0" height="2" fill="#000" fill-opacity=".55"/><rect x="42.0" y="27.0" width="1.0" height="2" fill="#000" fill-opacity=".55"/><rect x="44.0" y="27.0" width="11.0" height="2" fill="#a31515" fill-opacity=".55"/><rect x="55.0" y="27.0" width="1.0" height="2" fill="#000" fill-opacity=".55"/><rect x="56.0" y="27.0" width="1.0" height="2" fill="#000" fill-opacity=".55"/><rect x="57.0" y="27.0" width="6.0" height="2" fill="#000" fill-opacity=".55"/><rect x="63.0" y="27.0" width="1.0" height="2" fill="#000" fill-opacity=".55"/><rect x="64.0" y="27.0" width="6.0" height="2" fill="#000" fill-opacity=".55"/><rect x="71.0" y="27.0" width="1.0" height="2" fill="#000" fill-opacity=".55"/><rect x="72.0" y="27.0" width="1.0" height="2" fill="#000" fill-opacity=".55"/><rect x="12.0" y="30.0" width="1.0" height="2" fill="#000" fill-opacity=".55"/><rect x="13.0" y="30.0" width="1.0" height="2" fill="#000" fill-opacity=".55"/><rect x="14.0" y="30.0" width="6.0" height="2" fill="#000" fill-opacity=".55"/><rect x="20.0" y="30.0" width="1.0" height="2" fill="#000" fill-opacity=".55"/><rect x="21.0" y="30.0" width="4.0" height="2" fill="#000" fill-opacity=".55"/><rect x="25.0" y="30.0" width="1.0" height="2" fill="#000" fill-opacity=".55"/><rect x="26.0" y="30.0" width="1.0" height="2" fill="#000" fill-opacity=".55"/><rect x="27.0" y="30.0" width="1.0" height="2" fill="#000" fill-opacity=".55"/><rect x="28.0" y="30.0" width="1.0" height="2" fill="#000" fill-opacity=".55"/><rect x="30.0" y="30.0" width="1.0" height="2" fill="#000" fill-opacity=".55"/><rect x="31.0" y="30.0" width="1.0" height="2" fill="#000" fill-opacity=".55"/><rect x="33.0" y="30.0" width="1.0" height="2" fill="#000" fill-opacity=".55"/><rect x="34.0" y="30.0" width="1.0" height="2" fill="#000" fill-opacity=".55"/><rect x="35.0" y="30.0" width="4.0" height="2" fill="#000" fill-opacity=".55"/><rect x="40.0" y="30.0" width="1.0" height="2" fill="#000" fill-opacity=".55"/><rect x="41.0" y="30.0" width="1.0" height="2" fill="#000" fill-opacity=".55"/><rect x="42.0" y="30.0" width="1.0" height="2" fill="#000" fill-opacity=".55"/><rect x="44.0" y="30.0" width="11.0" height="2" fill="#a31515" fill-opacity=".55"/><rect x="55.0" y="30.0" width="1.0" height="2" fill="#000" fill-opacity=".55"/><rect x="56.0" y="30.0" width="1.0" height="2" fill="#000" fill-opacity=".55"/><rect x="57.0" y="30.0" width="6.0" height="2" fill="#000" fill-opacity=".55"/><rect x="63.0" y="30.0" width="1.0" height="2" fill="#000" fill-opacity=".55"/><rect x="10.0" y="36.0" width="3.0" height="2" fill="#008000" fill-opacity=".55"/><rect x="10.0" y="39.0" width="3.0" height="2" fill="#008000" fill-opacity=".55"/><rect x="14.0" y="39.0" width="4.0" height="2" fill="#008000" fill-opacity=".55"/><rect x="19.0" y="39.0" width="4.0" height="2" fill="#008000" fill-opacity=".55"/><rect x="24.0" y="39.0" width="1.0" height="2" fill="#008000" fill-opacity=".55"/><rect x="26.0" y="39.0" width="6.0" height="2" fill="#008000" fill-opacity=".55"/><rect x="10.0" y="42.0" width="2.0" height="2" fill="#008000" fill-opacity=".55"/><rect x="10.0" y="45.0" width="4.0" height="2" fill="#000" fill-opacity=".55"/><rect x="15.0" y="45.0" width="1.0" height="2" fill="#000" fill-opacity=".55"/><rect x="17.0" y="45.0" width="4.0" height="2" fill="#000" fill-opacity=".55"/><rect x="21.0" y="45.0" width="1.0" height="2" fill="#000" fill-opacity=".55"/><rect x="22.0" y="45.0" width="3.0" height="2" fill="#000" fill-opacity=".55"/><rect x="25.0" y="45.0" width="1.0" height="2" fill="#000" fill-opacity=".55"/><rect x="26.0" y="45.0" width="1.0" height="2" fill="#000" fill-opacity=".55"/><rect x="27.0" y="45.0" width="2.0" height="2" fill="#000" fill-opacity=".55"/><rect x="29.0" y="45.0" width="1.0" height="2" fill="#000" fill-opacity=".55"/><rect x="31.0" y="45.0" width="5.0" height="2" fill="#000" fill-opacity=".55"/><rect x="36.0" y="45.0" width="1.0" height="2" fill="#000" fill-opacity=".55"/><rect x="38.0" y="45.0" width="1.0" height="2" fill="#000" fill-opacity=".55"/><rect x="39.0" y="45.0" width="1.0" height="2" fill="#000" fill-opacity=".55"/><rect x="41.0" y="45.0" width="1.0" height="2" fill="#000" fill-opacity=".55"/><rect x="12.0" y="48.0" width="6.0" height="2" fill="#0000ff" fill-opacity=".55"/><rect x="19.0" y="48.0" width="1.0" height="2" fill="#000" fill-opacity=".55"/><rect x="21.0" y="48.0" width="12.0" height="2" fill="#000" fill-opacity=".55"/><rect x="33.0" y="48.0" width="1.0" height="2" fill="#000" fill-opacity=".55"/><rect x="35.0" y="48.0" width="6.0" height="2" fill="#000" fill-opacity=".55"/><rect x="41.0" y="48.0" width="1.0" height="2" fill="#000" fill-opacity=".55"/><rect x="42.0" y="48.0" width="5.0" height="2" fill="#000" fill-opacity=".55"/><rect x="47.0" y="48.0" width="1.0" height="2" fill="#000" fill-opacity=".55"/><rect x="48.0" y="48.0" width="1.0" height="2" fill="#000" fill-opacity=".55"/><rect x="50.0" y="48.0" width="5.0" height="2" fill="#000" fill-opacity=".55"/><rect x="55.0" y="48.0" width="1.0" height="2" fill="#000" fill-opacity=".55"/><rect x="57.0" y="48.0" width="1.0" height="2" fill="#000" fill-opacity=".55"/><rect x="58.0" y="48.0" width="4.0" height="2" fill="#000" fill-opacity=".55"/><rect x="62.0" y="48.0" width="1.0" height="2" fill="#000" fill-opacity=".55"/><rect x="63.0" y="48.0" width="5.0" height="2" fill="#000" fill-opacity=".55"/><rect x="68.0" y="48.0" width="1.0" height="2" fill="#000" fill-opacity=".55"/><rect x="69.0" y="48.0" width="1.0" height="2" fill="#000" fill-opacity=".55"/><rect x="71.0" y="48.0" width="2.0" height="2" fill="#000" fill-opacity=".55"/><rect x="10.0" y="51.0" width="1.0" height="2" fill="#000" fill-opacity=".55"/><rect x="11.0" y="51.0" width="1.0" height="2" fill="#000" fill-opacity=".55"/><rect x="12.0" y="51.0" width="1.0" height="2" fill="#000" fill-opacity=".55"/><rect x="8.0" y="54.0" width="1.0" height="2" fill="#000" fill-opacity=".55"/><rect x="9.0" y="54.0" width="1.0" height="2" fill="#000" fill-opacity=".55"/><rect x="10.0" y="54.0" width="1.0" height="2" fill="#000" fill-opacity=".55"/><rect x="8.0" y="60.0" width="6.0" height="2" fill="#0000ff" fill-opacity=".55"/><rect x="15.0" y="60.0" width="1.0" height="2" fill="#000" fill-opacity=".55"/><rect x="10.0" y="63.0" width="5.0" height="2" fill="#000" fill-opacity=".55"/><rect x="15.0" y="63.0" width="1.0" height="2" fill="#000" fill-opacity=".55"/><rect x="17.0" y="63.0" width="1.0" height="2" fill="#000" fill-opacity=".55"/><rect x="12.0" y="66.0" width="4.0" height="2" fill="#000" fill-opacity=".55"/><rect x="16.0" y="66.0" width="1.0" height="2" fill="#000" fill-opacity=".55"/><rect x="18.0" y="66.0" width="6.0" height="2" fill="#a31515" fill-opacity=".55"/><rect x="24.0" y="66.0" width="1.0" height="2" fill="#000" fill-opacity=".55"/><rect x="10.0" y="69.0" width="1.0" height="2" fill="#000" fill-opacity=".55"/><rect x="11.0" y="69.0" width="1.0" height="2" fill="#000" fill-opacity=".55"/><rect x="10.0" y="72.0" width="5.0" height="2" fill="#000" fill-opacity=".55"/><rect x="15.0" y="72.0" width="1.0" height="2" fill="#000" fill-opacity=".55"/><rect x="17.0" y="72.0" width="1.0" height="2" fill="#000" fill-opacity=".55"/><rect x="12.0" y="75.0" width="4.0" height="2" fill="#000" fill-opacity=".55"/><rect x="16.0" y="75.0" width="1.0" height="2" fill="#000" fill-opacity=".55"/><rect x="18.0" y="75.0" width="7.0" height="2" fill="#a31515" fill-opacity=".55"/><rect x="25.0" y="75.0" width="1.0" height="2" fill="#000" fill-opacity=".55"/><rect x="10.0" y="78.0" width="1.0" height="2" fill="#000" fill-opacity=".55"/><rect x="11.0" y="78.0" width="1.0" height="2" fill="#000" fill-opacity=".55"/><rect x="10.0" y="81.0" width="9.0" height="2" fill="#000" fill-opacity=".55"/><rect x="19.0" y="81.0" width="1.0" height="2" fill="#000" fill-opacity=".55"/><rect x="21.0" y="81.0" width="1.0" height="2" fill="#000" fill-opacity=".55"/><rect x="12.0" y="84.0" width="6.0" height="2" fill="#000" fill-opacity=".55"/><rect x="18.0" y="84.0" width="1.0" height="2" fill="#000" fill-opacity=".55"/><rect x="20.0" y="84.0" width="12.0" height="2" fill="#a31515" fill-opacity=".55"/><rect x="32.0" y="84.0" width="1.0" height="2" fill="#000" fill-opacity=".55"/><rect x="12.0" y="87.0" width="4.0" height="2" fill="#000" fill-opacity=".55"/><rect x="16.0" y="87.0" width="1.0" height="2" fill="#000" fill-opacity=".55"/><rect x="18.0" y="87.0" width="8.0" height="2" fill="#a31515" fill-opacity=".55"/><rect x="26.0" y="87.0" width="1.0" height="2" fill="#000" fill-opacity=".55"/><rect x="12.0" y="90.0" width="3.0" height="2" fill="#000" fill-opacity=".55"/><rect x="15.0" y="90.0" width="1.0" height="2" fill="#000" fill-opacity=".55"/><rect x="17.0" y="90.0" width="1.0" height="2" fill="#098658" fill-opacity=".55"/><rect x="18.0" y="90.0" width="1.0" height="2" fill="#000" fill-opacity=".55"/><rect x="12.0" y="93.0" width="3.0" height="2" fill="#000" fill-opacity=".55"/><rect x="15.0" y="93.0" width="1.0" height="2" fill="#000" fill-opacity=".55"/><rect x="17.0" y="93.0" width="2.0" height="2" fill="#098658" fill-opacity=".55"/><rect x="19.0" y="93.0" width="1.0" height="2" fill="#000" fill-opacity=".55"/><rect x="12.0" y="96.0" width="4.0" height="2" fill="#000" fill-opacity=".55"/><rect x="16.0" y="96.0" width="1.0" height="2" fill="#000" fill-opacity=".55"/><rect x="18.0" y="96.0" width="1.0" height="2" fill="#000" fill-opacity=".55"/><rect x="19.0" y="96.0" width="6.0" height="2" fill="#a31515" fill-opacity=".55"/><rect x="25.0" y="96.0" width="1.0" height="2" fill="#000" fill-opacity=".55"/><rect x="27.0" y="96.0" width="5.0" height="2" fill="#a31515" fill-opacity=".55"/><rect x="32.0" y="96.0" width="1.0" height="2" fill="#000" fill-opacity=".55"/><rect x="33.0" y="96.0" width="1.0" height="2" fill="#000" fill-opacity=".55"/><rect x="12.0" y="99.0" width="9.0" height="2" fill="#000" fill-opacity=".55"/><rect x="21.0" y="99.0" width="1.0" height="2" fill="#000" fill-opacity=".55"/><rect x="23.0" y="99.0" width="1.0" height="2" fill="#098658" fill-opacity=".55"/><rect x="24.0" y="99.0" width="1.0" height="2" fill="#000" fill-opacity=".55"/><rect x="12.0" y="102.0" width="7.0" height="2" fill="#000" fill-opacity=".55"/><rect x="19.0" y="102.0" width="1.0" height="2" fill="#000" fill-opacity=".55"/><rect x="21.0" y="102.0" width="1.0" height="2" fill="#000" fill-opacity=".55"/><rect x="14.0" y="105.0" width="5.0" height="2" fill="#000" fill-opacity=".55"/><rect x="19.0" y="105.0" width="1.0" height="2" fill="#000" fill-opacity=".55"/><rect x="21.0" y="105.0" width="1.0" height="2" fill="#000" fill-opacity=".55"/><rect x="22.0" y="105.0" width="9.0" height="2" fill="#a31515" fill-opacity=".55"/><rect x="31.0" y="105.0" width="1.0" height="2" fill="#000" fill-opacity=".55"/><rect x="33.0" y="105.0" width="9.0" height="2" fill="#a31515" fill-opacity=".55"/><rect x="42.0" y="105.0" width="1.0" height="2" fill="#000" fill-opacity=".55"/><rect x="44.0" y="105.0" width="9.0" height="2" fill="#a31515" fill-opacity=".55"/><rect x="53.0" y="105.0" width="1.0" height="2" fill="#000" fill-opacity=".55"/><rect x="54.0" y="105.0" width="1.0" height="2" fill="#000" fill-opacity=".55"/><rect x="12.0" y="108.0" width="1.0" height="2" fill="#000" fill-opacity=".55"/><rect x="13.0" y="108.0" width="1.0" height="2" fill="#000" fill-opacity=".55"/><rect x="10.0" y="111.0" width="1.0" height="2" fill="#000" fill-opacity=".55"/><rect x="11.0" y="111.0" width="1.0" height="2" fill="#000" fill-opacity=".55"/><rect x="10.0" y="114.0" width="6.0" height="2" fill="#000" fill-opacity=".55"/><rect x="16.0" y="114.0" width="1.0" height="2" fill="#000" fill-opacity=".55"/><rect x="18.0" y="114.0" width="1.0" height="2" fill="#000" fill-opacity=".55"/><rect x="12.0" y="117.0" width="1.0" height="2" fill="#000" fill-opacity=".55"/><rect x="14.0" y="120.0" width="4.0" height="2" fill="#000" fill-opacity=".55"/><rect x="18.0" y="120.0" width="1.0" height="2" fill="#000" fill-opacity=".55"/><rect x="20.0" y="120.0" width="4.0" height="2" fill="#000" fill-opacity=".55"/><rect x="24.0" y="120.0" width="1.0" height="2" fill="#000" fill-opacity=".55"/><rect x="14.0" y="123.0" width="4.0" height="2" fill="#000" fill-opacity=".55"/><rect x="18.0" y="123.0" width="1.0" height="2" fill="#000" fill-opacity=".55"/><rect x="20.0" y="123.0" width="6.0" height="2" fill="#a31515" fill-opacity=".55"/><rect x="26.0" y="123.0" width="1.0" height="2" fill="#000" fill-opacity=".55"/><rect x="14.0" y="126.0" width="6.0" height="2" fill="#0000ff" fill-opacity=".55"/><rect x="20.0" y="126.0" width="1.0" height="2" fill="#000" fill-opacity=".55"/><rect x="16.0" y="129.0" width="11.0" height="2" fill="#a31515" fill-opacity=".55"/><rect x="28.0" y="129.0" width="15.0" height="2" fill="#a31515" fill-opacity=".55"/><rect x="44.0" y="129.0" width="17.0" height="2" fill="#a31515" fill-opacity=".55"/><rect x="62.0" y="129.0" width="9.0" height="2" fill="#a31515" fill-opacity=".55"/><rect x="72.0" y="129.0" width="1.0" height="2" fill="#a31515" fill-opacity=".55"/><rect x="14.0" y="132.0" width="10.0" height="2" fill="#000" fill-opacity=".55"/><rect x="24.0" y="132.0" width="1.0" height="2" fill="#000" fill-opacity=".55"/><rect x="26.0" y="132.0" width="2.0" height="2" fill="#098658" fill-opacity=".55"/><rect x="28.0" y="132.0" width="1.0" height="2" fill="#000" fill-opacity=".55"/><rect x="14.0" y="135.0" width="9.0" height="2" fill="#000" fill-opacity=".55"/><rect x="23.0" y="135.0" width="1.0" height="2" fill="#000" fill-opacity=".55"/><rect x="25.0" y="135.0" width="1.0" height="2" fill="#000" fill-opacity=".55"/><rect x="16.0" y="138.0" width="5.0" height="2" fill="#000" fill-opacity=".55"/><rect x="21.0" y="138.0" width="1.0" height="2" fill="#000" fill-opacity=".55"/><rect x="23.0" y="138.0" width="3.0" height="2" fill="#098658" fill-opacity=".55"/><rect x="26.0" y="138.0" width="1.0" height="2" fill="#000" fill-opacity=".55"/><rect x="14.0" y="141.0" width="1.0" height="2" fill="#000" fill-opacity=".55"/><rect x="15.0" y="141.0" width="1.0" height="2" fill="#000" fill-opacity=".55"/><rect x="12.0" y="144.0" width="1.0" height="2" fill="#000" fill-opacity=".55"/><rect x="13.0" y="144.0" width="1.0" height="2" fill="#000" fill-opacity=".55"/><rect x="10.0" y="147.0" width="1.0" height="2" fill="#000" fill-opacity=".55"/><rect x="11.0" y="147.0" width="1.0" height="2" fill="#000" fill-opacity=".55"/><rect x="8.0" y="150.0" width="1.0" height="2" fill="#000" fill-opacity=".55"/><rect x="9.0" y="150.0" width="1.0" height="2" fill="#000" fill-opacity=".55"/></svg><div class="abs" style="left:632px;top:10px;width:11px;height:1px;background:#222"></div><div class="abs" style="left:0;top:0;width:557px;height:4px;background:linear-gradient(#e6e6e6,rgba(230,230,230,0))"></div></div>
</div>
</body></html>
